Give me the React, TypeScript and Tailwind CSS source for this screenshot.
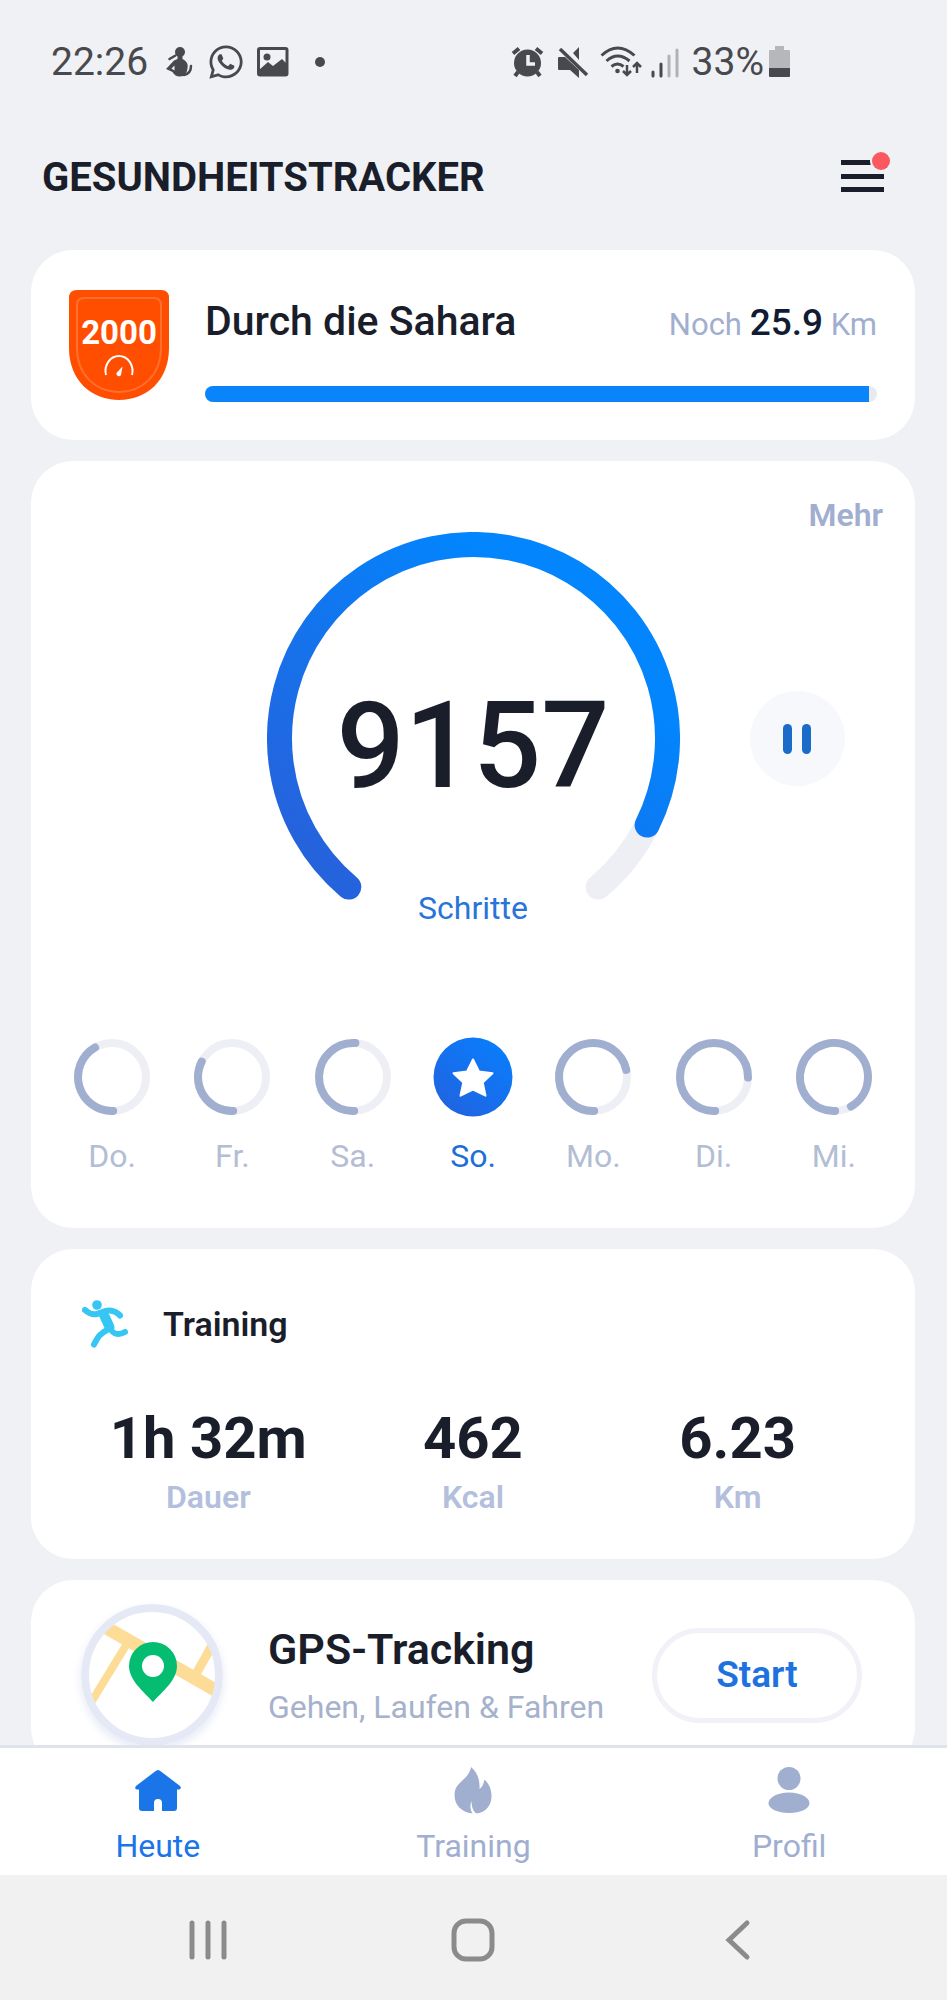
import { useState } from 'react'
import { FaWhatsapp } from 'react-icons/fa'

const days = [
  { label: 'Do.', sweep: 150 },
  { label: 'Fr.', sweep: 117 },
  { label: 'Sa.', sweep: 184 },
  { label: 'So.', sweep: 360, done: true },
  { label: 'Mo.', sweep: 258 },
  { label: 'Di.', sweep: 271 },
  { label: 'Mi.', sweep: 330 },
]

const stats = [
  { value: '1h 32m', label: 'Dauer' },
  { value: '462', label: 'Kcal' },
  { value: '6.23', label: 'Km' },
]

// angles are in degrees, clockwise, 0 = straight down
function arc(c: number, r: number, from: number, to: number) {
  const pt = (a: number) => {
    const rad = (a * Math.PI) / 180
    return `${(c - r * Math.sin(rad)).toFixed(2)} ${(c + r * Math.cos(rad)).toFixed(2)}`
  }
  return `M${pt(from)}A${r} ${r} 0 ${to - from > 180 ? 1 : 0} 1 ${pt(to)}`
}

function StatusBar() {
  return (
    <div className="h-[124px] shrink-0 flex items-center justify-between pl-[51px] pr-[157px] text-[#48494e]">
      <div className="flex items-center">
        <span className="text-[39px] leading-[48px]">22:26</span>
        <svg className="ml-[18px] w-[27px] h-[30px]" viewBox="0 0 27 30" fill="currentColor">
          <circle cx="14" cy="5" r="5" />
          <path d="M11.500 8h5v4c4 2 6 5 5 9-.5 5-3 8.500-7.500 8.500-4 0-6-2-7.500-4.500L0 22l8-8.500 3.500-1.500z" />
          <path d="M3.500 12l6-3.500M18 28c5-1 7-5 7-9" fill="none" stroke="currentColor" strokeWidth="2.500" strokeLinecap="round" />
          <path d="M5.500 21.500l3-3v5z" fill="#f0f1f5" />
        </svg>
        <FaWhatsapp className="ml-[14px] w-[38px] h-[38px]" />
        <svg className="ml-3 w-[32px] h-[30px]" viewBox="0 0 32 30">
          <rect x="1.500" y="1.500" width="28.500" height="26.500" rx="1.500" fill="none" stroke="currentColor" strokeWidth="3" />
          <circle cx="10" cy="10" r="3.500" fill="currentColor" />
          <path d="M2 23l9-8 5 4 9-7 5 5v11H2z" fill="currentColor" />
        </svg>
        <span className="ml-[26px] w-[10px] h-[10px] rounded-full bg-[#48494e]" />
      </div>

      <div className="flex items-center">
        <svg className="w-[33px] h-[32px]" viewBox="0 0 33 32">
          <circle cx="16.500" cy="17" r="13.500" fill="currentColor" />
          <path d="M2 7.500l6-5M31 7.500l-6-5M7 26l-3 4M26 26l3 4" stroke="currentColor" strokeWidth="4" />
          <path d="M17 9v9h7" fill="none" stroke="#f0f1f5" strokeWidth="3.500" />
        </svg>
        <svg className="ml-[14px] w-[31px] h-[32px]" viewBox="0 0 31 32" fill="currentColor">
          <path d="M1 11h6l14 13v8l-9-8H1q-1 0-1-1V12q0-1 1-1zM21 1v13l-6-7z" />
          <path d="M2 3l27 26" stroke="currentColor" strokeWidth="3.500" />
        </svg>
        <svg className="ml-[11px] w-[43px] h-[32px]" viewBox="0 0 43 32" fill="none" stroke="currentColor" strokeWidth="3">
          <path d="M1.500 9.500q16-15 33 0M6.500 15q11-10 23 0M11.500 20.500q6-5 12 0" />
          <circle cx="17.500" cy="25" r="2.300" fill="currentColor" stroke="none" />
          <path d="M27 19v10M23 25l4 4 4-4M37 27V17M33 21l4-4 4 4" strokeWidth="2.500" />
        </svg>
        <svg className="ml-2 w-[28px] h-[32px]" viewBox="0 0 28 32" strokeWidth="3" strokeLinecap="round">
          <path d="M2 26v4M10 18v12" stroke="#48494e" />
          <path d="M18 10v20M26 4v26" stroke="#b1b2b6" />
        </svg>
        <span className="ml-[13px] text-[39px] leading-[48px]">33%</span>
        <svg className="ml-[5px] w-[21px] h-[32px]" viewBox="0 0 21 32">
          <path d="M6 0h9v4h5q1 0 1 1v17H0V5q0-1 1-1h5z" fill="#b6b7bb" />
          <path d="M0 22h21v8q0 1-1 1H1q-1 0-1-1z" fill="#48494e" />
        </svg>
      </div>
    </div>
  )
}

function Badge() {
  return (
    <svg className="w-[100px] h-[110px] shrink-0" viewBox="0 0 100 110">
      <path d="M8 0h84q8 0 8 8v50c0 33-23 52-50 52S0 91 0 58V8q0-8 8-8z" fill="#ff4e00" />
      <path d="M15 8h70q7 0 7 7v43c0 27-19 44-42 44S8 85 8 58V15q0-7 7-7z" fill="none" stroke="#ff6f2e" strokeWidth="2" />
      <text x="50" y="54" textAnchor="middle" fill="#fff" fontSize="33" fontWeight="700" fontFamily="Roboto, sans-serif">2000</text>
      <path d="M37 85a13.500 15 0 1 1 26 0" fill="none" stroke="#fff" strokeWidth="2" />
      <path d="M47.500 83l6-6.500-1.500 8.500a2.500 2.500 0 0 1-4.500-2z" fill="#fff" />
    </svg>
  )
}

function StepRing({ steps }: { steps: number }) {
  return (
    <div className="grid w-[413px] h-[413px]">
      <svg className="[grid-area:1/1] w-full h-full" viewBox="0 0 413 413" fill="none" strokeWidth="25" strokeLinecap="round">
        <defs>
          <linearGradient id="ring" x1="0.1" y1="0.9" x2="0.75" y2="0.25">
            <stop offset="0" stopColor="#2563dd" />
            <stop offset="1" stopColor="#0285fd" />
          </linearGradient>
        </defs>
        <path d={arc(206.5, 194, 40, 320)} stroke="#eeeff5" />
        <path d={arc(206.5, 194, 40, 296.5)} stroke="url(#ring)" />
      </svg>
      <div className="[grid-area:1/1] flex flex-col items-center pt-[154px]">
        <span className="text-[120px] leading-[120px] font-medium text-[#1a1e2b]">{steps}</span>
        <span className="mt-[82px] text-[32px] leading-[40px] text-[#2874d8]">Schritte</span>
      </div>
    </div>
  )
}

function DayRing({ sweep, done }: { sweep: number; done?: boolean }) {
  if (done) {
    return (
      <svg className="w-20 h-20" viewBox="0 0 80 80">
        <defs>
          <linearGradient id="day" x1="0.2" y1="0.9" x2="0.8" y2="0.1">
            <stop offset="0" stopColor="#1f65e2" />
            <stop offset="1" stopColor="#0b7cfa" />
          </linearGradient>
        </defs>
        <circle cx="40" cy="40" r="39.500" fill="url(#day)" />
        <path
          d="M40 22.500l6 12 13.500 1.800-9.800 9.200 2.800 13.200L40 52.500l-12.500 6.200 2.800-13.200-9.800-9.200L34 34.500z"
          fill="#fff" stroke="#fff" strokeWidth="2" strokeLinejoin="round"
        />
      </svg>
    )
  }
  return (
    <svg className="w-20 h-20" viewBox="0 0 80 80" fill="none" strokeWidth="8" strokeLinecap="round">
      <circle cx="40" cy="40" r="34" stroke="#eeeff5" />
      <path d={arc(40, 34, -2, sweep)} stroke="#a0aecf" />
    </svg>
  )
}

function MapIcon() {
  return (
    <svg className="w-[142px] h-[142px] shrink-0 rounded-full shadow-[0_4px_10px_#e5e9f5]" viewBox="0 0 142 142">
      <circle cx="71" cy="71" r="67" fill="#fff" />
      <g fill="none" stroke="#fddc98">
        <path d="M24 23l112 64" strokeWidth="13" />
        <path d="M47 38L11 97" strokeWidth="8" />
        <path d="M115 70l18-32" strokeWidth="9" />
      </g>
      <circle cx="71" cy="71" r="67" fill="none" stroke="#e5e9f5" strokeWidth="8" />
      <path d="M72 98C62 87 48 76 48 62a24 24 0 0 1 48 0c0 14-14 25-24 36z" fill="#05bd70" />
      <circle cx="72" cy="62" r="11" fill="#fff" />
    </svg>
  )
}

const tabs = [
  {
    label: 'Heute',
    icon: (
      <path d="M21 5.500q3-3 6 0L46 20q2 3-1 3.500h-2V42q0 3-3 3H28v-8q0-4-4-4t-4 4v8H8q-3 0-3-3V23.500H3q-3-.5-1-3.500z" />
    ),
  },
  {
    label: 'Training',
    icon: (
      <path d="M22 1c6 5 9 12 8.500 22 3-2 4-5 5-9.500C40 18 42.500 23 42.500 30c0 9-5 16-15 17.500-3-2-5-6-5-12.500-2 4-1 9 1 12.500C12 46 5.500 39 5.500 29c0-14 14-14 16.500-28z" />
    ),
  },
  {
    label: 'Profil',
    icon: (
      <>
        <circle cx="24" cy="12.500" r="11.500" />
        <path d="M24 26.500c12 0 20.500 5 20.500 11 0 5-9 9.500-20.500 9.500S3.500 42.500 3.500 37.500c0-6 8.500-11 20.500-11z" />
      </>
    ),
  },
]

export default function App() {
  const [tab, setTab] = useState('Heute')

  return (
    <div className="h-screen flex flex-col bg-[#f0f1f5] font-['Roboto',sans-serif] text-[#1a1e2b]">
      <StatusBar />

      <header className="h-[104px] shrink-0 flex items-center justify-between pl-[42px] pr-[63px]">
        <h1 className="pt-1 text-[40px] leading-[48px] font-bold">GESUNDHEITSTRACKER</h1>
        <button aria-label="Menü" className="relative w-[43px] h-8 flex flex-col justify-between">
          <span className="w-full h-[5px] bg-[#1a1e2b]" />
          <span className="w-full h-[5px] bg-[#1a1e2b]" />
          <span className="w-full h-[5px] bg-[#1a1e2b]" />
          <span className="absolute -top-2 -right-[6px] w-[18px] h-[18px] rounded-full bg-[#f9595f] ring-2 ring-[#f0f1f5]" />
        </button>
      </header>

      <main className="flex-1 min-h-0 overflow-y-auto [scrollbar-width:none] pt-[22px] pl-[31px] pr-8 flex flex-col gap-[21px]">
        <section className="shrink-0 rounded-[42px] bg-white pt-10 pb-[38px] px-[38px] flex items-start gap-9">
          <Badge />
          <div className="flex-1 pt-1">
            <div className="h-[54px] flex items-baseline justify-between">
              <h2 className="text-[41px] leading-[54px] font-medium">Durch die Sahara</h2>
              <p className="text-[31px] leading-[54px] text-[#a0aecf]">
                Noch <span className="text-[37px] font-medium text-[#101c33]">25.9</span> Km
              </p>
            </div>
            <div className="mt-[38px] h-4 rounded-full bg-[#e8eaf0] overflow-hidden">
              <div className="h-full bg-[#0a84fb]" style={{ width: '98.8%' }} />
            </div>
          </div>
        </section>

        <section className="shrink-0 rounded-[42px] bg-white pb-[52px]">
          <div className="grid grid-cols-[1fr_auto_1fr]">
            <div />
            <div className="pt-[71px]">
              <StepRing steps={9157} />
            </div>
            <div className="flex flex-col items-start pt-[34px]">
              <a href="#mehr" className="self-end mr-8 text-[32px] leading-[40px] font-semibold text-[#a0aecf]">Mehr</a>
              <button aria-label="Pause" className="ml-[70px] mt-[156px] w-[95px] h-[95px] rounded-full bg-[#f7f8fb] flex items-center justify-center gap-[10px]">
                <span className="w-[9px] h-[30px] rounded-full bg-[#1a6cc8]" />
                <span className="w-[9px] h-[30px] rounded-full bg-[#1a6cc8]" />
              </button>
            </div>
          </div>
          <div className="mt-[92px] px-[21px] grid grid-cols-7">
            {days.map(d => (
              <div key={d.label} className="flex flex-col items-center">
                <DayRing sweep={d.sweep} done={d.done} />
                <span className={`mt-[19px] text-[32px] leading-[40px] ${d.done ? 'text-[#1d6fd8]' : 'text-[#b3bdd4]'}`}>{d.label}</span>
              </div>
            ))}
          </div>
        </section>

        <section className="shrink-0 rounded-[42px] bg-white pt-[49px] pb-[42px]">
          <div className="flex items-center gap-[35px] pl-[51px]">
            <svg className="w-[46px] h-12" viewBox="0 0 46 48" fill="none" stroke="#35c6f4" strokeLinecap="round" strokeLinejoin="round">
              <circle cx="15" cy="5" r="4.800" fill="#35c6f4" stroke="none" />
              <path d="M3 10c4 3.500 8 5 12 4s8-4 13-3.500 7.500 2 10 5" strokeWidth="6" />
              <path d="M22 15l5.500 12" strokeWidth="10" />
              <path d="M28 28c3 6 8 8 15 4" strokeWidth="6" />
              <path d="M27 29c-9 4-11 8-15 15.500" strokeWidth="6" />
            </svg>
            <h2 className="text-[34px] leading-[52px] font-semibold">Training</h2>
          </div>
          <div className="mt-14 px-[45px] grid grid-cols-3 text-center">
            {stats.map(s => (
              <div key={s.label}>
                <p className="text-[58px] leading-[64px] font-bold">{s.value}</p>
                <p className="mt-[7px] text-[32px] leading-[40px] font-semibold text-[#b3bfdc]">{s.label}</p>
              </div>
            ))}
          </div>
        </section>

        <section className="shrink-0 rounded-[42px] bg-white pt-6 pb-6 pl-[50px] pr-[53px] flex items-center">
          <MapIcon />
          <div className="ml-[45px] flex-1">
            <h2 className="text-[43px] leading-[52px] font-semibold">GPS-Tracking</h2>
            <p className="mt-3 text-[32px] leading-[40px] text-[#a6b1cc]">Gehen, Laufen &amp; Fahren</p>
          </div>
          <button className="w-[210px] h-[95px] rounded-full border-[5px] border-[#f1f2f8] text-[37px] font-semibold text-[#1d72e0]">Start</button>
        </section>
      </main>

      <nav className="shrink-0 bg-white border-t-[3px] border-[#e0e3e9] grid grid-cols-3">
        {tabs.map(t => (
          <button
            key={t.label}
            onClick={() => setTab(t.label)}
            className={`pt-[18px] pb-[9px] flex flex-col items-center ${tab === t.label ? 'text-[#1a75e8]' : 'text-[#a0aecf]'}`}
          >
            <svg className="w-12 h-12" viewBox="0 0 48 48" fill="currentColor">{t.icon}</svg>
            <span className="mt-3 text-[32px] leading-[40px]">{t.label}</span>
          </button>
        ))}
      </nav>

      <div className="h-[125px] shrink-0 bg-[#f1f1f1] pt-1 px-[75px] grid grid-cols-3 items-center justify-items-center">
        <button aria-label="Letzte Apps">
          <svg className="w-11 h-11" viewBox="0 0 44 44" stroke="#8b8b8b" strokeWidth="5" strokeLinecap="round">
            <path d="M6 5v34M22 5v34M38 5v34" />
          </svg>
        </button>
        <button aria-label="Startseite">
          <svg className="w-11 h-11" viewBox="0 0 44 44" fill="none" stroke="#8b8b8b" strokeWidth="5">
            <rect x="3" y="3" width="38" height="38" rx="12" />
          </svg>
        </button>
        <button aria-label="Zurück">
          <svg className="w-11 h-11" viewBox="0 0 44 44" fill="none" stroke="#8b8b8b" strokeWidth="5" strokeLinecap="round">
            <path d="M30 5L12 22l18 17" />
          </svg>
        </button>
      </div>
    </div>
  )
}
